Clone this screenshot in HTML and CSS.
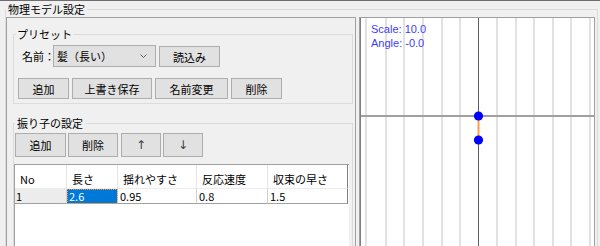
FILE: index.html
```html
<!DOCTYPE html>
<html lang="ja">
<head>
<meta charset="utf-8">
<title>物理モデル設定</title>
<link rel="stylesheet" href="styles.css">
</head>
<body>
<div class="app">
  <div class="topline"></div>
  <fieldset class="frame">
    <legend class="frame-title">物理モデル設定</legend>
    <div class="panes">
      <div class="left">
        <fieldset class="group preset">
          <legend>プリセット</legend>
          <div class="row r1">
            <span class="lbl">名前：</span>
            <div class="combo"><span class="combo-text">髪（長い）</span><svg class="chev" width="7" height="4" viewBox="0 0 7 4"><polyline points="0.5,0.5 3.5,3.5 6.5,0.5" fill="none" stroke="#606060" stroke-width="1"/></svg></div>
            <button class="btn load">読込み</button>
          </div>
          <div class="row r2">
            <button class="btn w51">追加</button>
            <button class="btn w80">上書き保存</button>
            <button class="btn w73">名前変更</button>
            <button class="btn w51">削除</button>
          </div>
        </fieldset>
        <fieldset class="group pend">
          <legend>振り子の設定</legend>
          <div class="row r3">
            <button class="btn w51">追加</button>
            <button class="btn w50">削除</button>
            <button class="btn w40 arrow up">↑</button>
            <button class="btn w40 arrow">↓</button>
          </div>
          <div class="grid">
            <div class="gr head">
              <div class="c c1">No</div>
              <div class="c c2">長さ</div>
              <div class="c c3">揺れやすさ</div>
              <div class="c c4">反応速度</div>
              <div class="c c5">収束の早さ</div>
            </div>
            <div class="gr data">
              <div class="c c1 rowhead">1</div>
              <div class="c c2 sel">2.6</div>
              <div class="c c3">0.95</div>
              <div class="c c4">0.8</div>
              <div class="c c5">1.5</div>
            </div>
          </div>
        </fieldset>
      </div>
      <div class="right">
        <svg class="canvas" width="233" height="230" viewBox="0 0 233 230">
          <g stroke="#e2e2e2" stroke-width="2">
            <line x1="5" y1="0" x2="5" y2="230"/>
            <line x1="25" y1="0" x2="25" y2="230"/>
            <line x1="43" y1="0" x2="43" y2="230"/>
            <line x1="62" y1="0" x2="62" y2="230"/>
            <line x1="81" y1="0" x2="81" y2="230"/>
            <line x1="99" y1="0" x2="99" y2="230"/>
            <line x1="136" y1="0" x2="136" y2="230"/>
            <line x1="155" y1="0" x2="155" y2="230"/>
            <line x1="173" y1="0" x2="173" y2="230"/>
            <line x1="192" y1="0" x2="192" y2="230"/>
            <line x1="210" y1="0" x2="210" y2="230"/>
            <line x1="229" y1="0" x2="229" y2="230"/>
          </g>
          <line x1="0" y1="98" x2="233" y2="98" stroke="#a0a0a0" stroke-width="2"/>
          <line x1="117.5" y1="0" x2="117.5" y2="230" stroke="#606060" stroke-width="1"/>
          <line x1="117.5" y1="98" x2="117.5" y2="122" stroke="#ff9a50" stroke-width="2"/>
          <circle cx="117.5" cy="98" r="4.6" fill="#0000ff"/>
          <circle cx="117.5" cy="122" r="4.6" fill="#0000ff"/>
          <text class="info" x="10" y="15">Scale: 10.0</text>
          <text class="info" x="10" y="29">Angle: -0.0</text>
        </svg>
      </div>
    </div>
  </fieldset>
</div>
</body>
</html>
```

FILE: styles.css
```css
html, body {
  margin: 0;
  padding: 0;
}
body {
  background: #f0f0f0;
  font-family: "Noto Sans CJK JP", "Noto Sans", sans-serif;
  font-size: 11px;
  color: #000;
}
.app {
  width: 600px;
  height: 246px;
  overflow: hidden;
}
.topline {
  height: 1px;
  background: #6e6e6e;
}
.frame {
  margin: 1px 0 0 5px;
  width: 593px;
  box-sizing: border-box;
  border: 1px solid #dcdcdc;
  padding: 1px 2px 0 0;
  min-inline-size: 0;
}
.frame-title {
  padding: 0 2px;
  line-height: 14px;
}
.panes {
  display: flex;
  gap: 3px;
  height: 240px;
}
.left {
  width: 350px;
  box-sizing: border-box;
  border: 1px solid #a0a0a0;
  border-bottom: none;
}
.right {
  width: 236px;
  box-sizing: border-box;
  border: 1px solid #a0a0a0;
  border-bottom: none;
  background: #fff;
  box-shadow: inset 1px 0 0 #808080;
}
.canvas {
  display: block;
  margin-left: 1px;
}
.info {
  font-family: "Liberation Sans", Arial, sans-serif;
  font-size: 11px;
  fill: #3d3dff;
}
.group {
  border: 1px solid #dcdcdc;
  margin: 0;
  box-sizing: border-box;
  width: 340px;
  min-inline-size: 0;
}
.group legend {
  line-height: 14px;
  padding: 0 1px;
}
.preset {
  margin: 9px 0 0 6px;
  padding: 4px 0 4px 4px;
}
.preset legend {
  margin-left: -2px;
}
.pend {
  margin: 12px 0 0 6px;
  padding: 3px 0 0 0;
  height: 140px;
}
.pend legend {
  margin-left: 1px;
  padding: 0 2px;
}
.row {
  display: flex;
  align-items: center;
}
.lbl {
  width: 31px;
  margin-left: 4px;
  line-height: 14px;
  white-space: nowrap;
}
.combo {
  width: 103px;
  height: 22px;
  box-sizing: border-box;
  border: 1px solid #adadad;
  background: #e1e1e1;
  display: flex;
  align-items: center;
  padding-left: 3px;
  margin-right: 3px;
}
.combo-text {
  line-height: 14px;
}
.chev {
  margin-left: auto;
  margin-right: 8px;
}
.btn {
  font-family: "Noto Sans CJK JP", "Noto Sans", sans-serif;
  font-size: 11px;
  line-height: 14px;
  background: #e1e1e1;
  border: 1px solid #adadad;
  padding: 0;
  margin: 0;
  box-sizing: border-box;
  color: #000;
}
.load {
  width: 61px;
  height: 21px;
  margin-top: 1px;
}
.r2 {
  margin-top: 11px;
  gap: 3px;
}
.r2 .btn {
  height: 21px;
}
.w51 { width: 51px; }
.w50 { width: 50px; }
.w80 { width: 80px; }
.w73 { width: 73px; }
.w40 { width: 40px; }
.r3 {
  margin-left: 1px;
  gap: 2px;
}
.r3 .btn {
  height: 24px;
}
.arrow {
  color: #404040;
  font-family: "DejaVu Sans", sans-serif;
  font-size: 12px;
}
.up {
  margin-left: 1px;
}
.grid {
  margin-top: 7px;
  width: 335px;
  height: 120px;
  box-sizing: border-box;
  background: #fff;
  border-left: 1px solid #a0a0a0;
  border-top: 1px solid #a0a0a0;
}
.gr {
  display: flex;
}
.c {
  box-sizing: border-box;
  line-height: 14px;
  white-space: nowrap;
  overflow: hidden;
}
.c1 { width: 52px; }
.c2 { width: 51px; }
.c3 { width: 79px; }
.c4 { width: 71px; }
.c5 { width: 80px; border-right: 1px solid #808080 !important; }
.head .c {
  height: 24px;
  padding: 7px 0 0 5px;
  border-right: 1px solid #e4e4e4;
  border-bottom: 1px solid #ececec;
}
.data .c {
  height: 15px;
  padding-left: 2px;
  border-right: 1px solid #d0d0d0;
  border-bottom: 1px solid #a0a0a0;
}
.data .rowhead {
  background: #ececec;
  padding-left: 1px;
}
.data .sel {
  background: #0078d7;
  color: #fff;
  outline: 1px dotted #ff9a30;
  outline-offset: -1px;
}
```
